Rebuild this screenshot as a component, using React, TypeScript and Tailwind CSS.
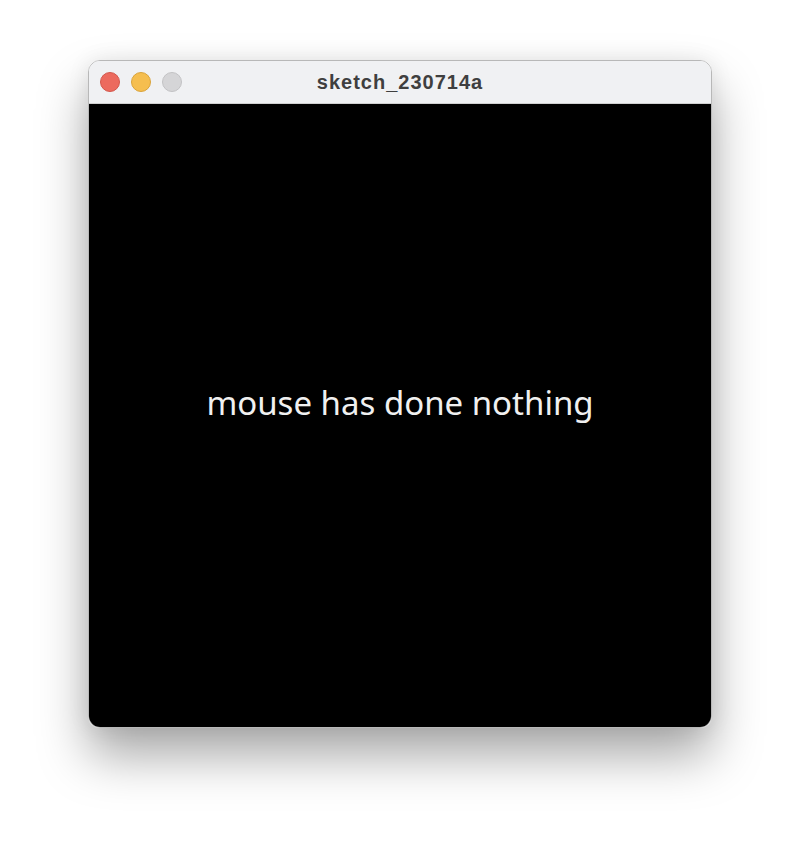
export default function App() {
  return (
    <div className="w-[800px] h-[844px] bg-white relative overflow-hidden">
      <div className="absolute left-[88px] top-[60px] w-[624px] h-[668px] rounded-[12px] overflow-hidden flex flex-col border border-[#b8b8b8] shadow-[0_28px_50px_rgba(0,0,0,0.34),0_0_22px_rgba(0,0,0,0.08)]">
        <div className="h-[43px] bg-[#f0f1f3] flex items-center relative shrink-0 border-b border-[#d0d0d0]">
          <div className="flex items-center gap-[11px] pl-[11px]">
            <div className="w-[20px] h-[20px] rounded-full bg-[#ec6a5e] border border-[#d2574c]" />
            <div className="w-[20px] h-[20px] rounded-full bg-[#f5be4f] border border-[#d9a33a]" />
            <div className="w-[20px] h-[20px] rounded-full bg-[#d5d5d7] border border-[#c2c2c4]" />
          </div>
          <div className="absolute inset-0 flex items-center justify-center text-[20px] tracking-[1px] font-bold text-[#3f3f3f]" style={{ fontFamily: '"Liberation Sans", Arial, sans-serif' }}>
            sketch_230714a
          </div>
        </div>
        <div className="flex-1 bg-black flex items-center justify-center">
          <div className="text-[#f0f0f0] text-[33px] mb-[26px]" style={{ fontFamily: '"Noto Sans", "Open Sans", sans-serif' }}>
            mouse has done nothing
          </div>
        </div>
      </div>
    </div>
  );
}
